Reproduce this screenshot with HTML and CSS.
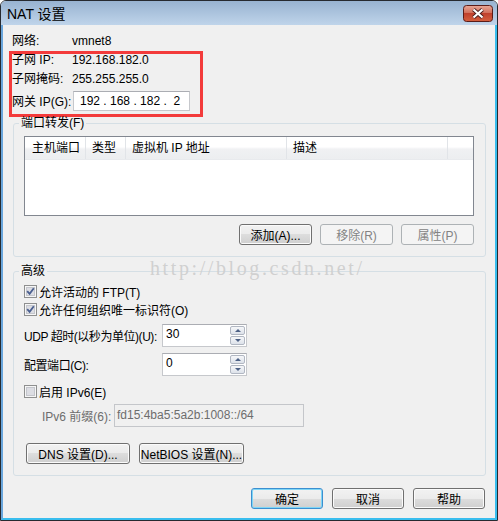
FILE: index.html
```html
<!DOCTYPE html>
<html lang="zh-CN">

<head>
    <meta charset="UTF-8">
    <meta name="viewport" content="width=device-width, initial-scale=1.0">
    <title>NAT 设置</title>
    <link rel="stylesheet" href="styles.css">
</head>

<body>
    <div class="window">
        <div class="titlebar">
            <span class="title">NAT 设置</span>
            <svg class="close" width="30" height="17" viewBox="0 0 30 17">
                <defs>
                    <linearGradient id="closeGrad" x1="0" y1="0" x2="0" y2="1">
                        <stop offset="0" stop-color="#e8a898" />
                        <stop offset="0.5" stop-color="#d06a55" />
                        <stop offset="0.5" stop-color="#c0402c" />
                        <stop offset="1" stop-color="#d5603f" />
                    </linearGradient>
                </defs>
                <rect x="0.5" y="0.5" width="29" height="16" rx="3" fill="url(#closeGrad)" stroke="#5a1c18" />
                <path d="M10.5 4.5 L19.5 12.5 M19.5 4.5 L10.5 12.5" stroke="#4a2020" stroke-width="4" />
                <path d="M10.5 4.5 L19.5 12.5 M19.5 4.5 L10.5 12.5" stroke="#fff" stroke-width="2.2" />
            </svg>
        </div>

        <div class="client">
            <div class="info">
                <span class="lbl">网络:</span>
                <span>vmnet8</span>
            </div>

            <div class="redbox">
                <div class="row r1"><span class="lbl">子网 IP:</span><span>192.168.182.0</span></div>
                <div class="row r2"><span class="lbl">子网掩码:</span><span>255.255.255.0</span></div>
                <div class="row r3"><span class="lbl">网关 IP(G):</span><span class="ipbox">192 . 168 . 182 .  2</span></div>
            </div>

            <fieldset class="group ports">
                <legend>端口转发(F)</legend>
                <div class="list">
                    <div class="lv-head">
                        <span class="col c1">主机端口</span>
                        <span class="col c2">类型</span>
                        <span class="col c3">虚拟机 IP 地址</span>
                        <span class="col c4">描述</span>
                        <span class="col c5"></span>
                    </div>
                </div>
                <div class="btn-row">
                    <button class="btn">添加(A)...</button>
                    <button class="btn" disabled>移除(R)</button>
                    <button class="btn" disabled>属性(P)</button>
                </div>
            </fieldset>

            <fieldset class="group adv">
                <legend>高级</legend>
                <div class="check">
                    <svg class="cb" width="13" height="13" viewBox="0 0 13 13">
                        <rect x="0.5" y="0.5" width="12" height="12" fill="#f6f6f6" stroke="#8e8f8f" />
                        <rect x="2.5" y="2.5" width="8" height="8" fill="#dcdde3" stroke="#c4c6cc" />
                        <path d="M3.2 6.2 L5.6 8.8 L9.8 3.2" fill="none" stroke="#4a5f8f" stroke-width="1.8" />
                    </svg>
                    <span>允许活动的 FTP(T)</span>
                </div>
                <div class="check">
                    <svg class="cb" width="13" height="13" viewBox="0 0 13 13">
                        <rect x="0.5" y="0.5" width="12" height="12" fill="#f6f6f6" stroke="#8e8f8f" />
                        <rect x="2.5" y="2.5" width="8" height="8" fill="#dcdde3" stroke="#c4c6cc" />
                        <path d="M3.2 6.2 L5.6 8.8 L9.8 3.2" fill="none" stroke="#4a5f8f" stroke-width="1.8" />
                    </svg>
                    <span>允许任何组织唯一标识符(O)</span>
                </div>

                <div class="field-row">
                    <span class="flbl">UDP 超时(以秒为单位)(U):</span>
                    <div class="spin">
                        <span class="spin-val">30</span>
                        <div class="spin-btns">
                            <span class="arrow up"></span>
                            <span class="arrow down"></span>
                        </div>
                    </div>
                </div>
                <div class="field-row">
                    <span class="flbl">配置端口(C):</span>
                    <div class="spin">
                        <span class="spin-val">0</span>
                        <div class="spin-btns">
                            <span class="arrow up"></span>
                            <span class="arrow down"></span>
                        </div>
                    </div>
                </div>

                <div class="check ipv6">
                    <svg class="cb" width="13" height="13" viewBox="0 0 13 13">
                        <rect x="0.5" y="0.5" width="12" height="12" fill="#f6f6f6" stroke="#8e8f8f" />
                        <rect x="2.5" y="2.5" width="8" height="8" fill="#dcdde3" stroke="#c4c6cc" />
                    </svg>
                    <span>启用 IPv6(E)</span>
                </div>
                <div class="prefix-row">
                    <span class="plbl">IPv6 前缀(6):</span>
                    <span class="prefix-input">fd15:4ba5:5a2b:1008::/64</span>
                </div>

                <div class="net-btns">
                    <button class="btn dns">DNS 设置(D)...</button>
                    <button class="btn netbios">NetBIOS 设置(N)...</button>
                </div>
            </fieldset>

            <div class="dialog-btns">
                <button class="btn default">确定</button>
                <button class="btn">取消</button>
                <button class="btn">帮助</button>
            </div>
        </div>

        <div class="watermark">http://blog.csdn.net/</div>
    </div>
</body>
</html>
```

FILE: styles.css
```css
* {
    box-sizing: border-box;
}

body {
    margin: 0;
    font-family: "Liberation Sans", "Noto Sans CJK SC", sans-serif;
    font-size: 12px;
    color: #000;
    background-color: #fff;
}

.window {
    position: relative;
    width: 498px;
    height: 521px;
    border: 1px solid #262a30;
    border-radius: 6px 6px 0 0;
    display: flex;
    flex-direction: column;
    overflow: hidden;
}

/* title bar */
.titlebar {
    flex: none;
    height: 24px;
    display: flex;
    align-items: center;
    justify-content: space-between;
    padding: 0 4px 0 6px;
    background: linear-gradient(#98b3d1, #bfd4ea);
}

.title {
    font-size: 14px;
}

.close {
    display: block;
}

.client {
    flex: 1;
    background-color: #f0f0f0;
    border: 2px solid #38bdee;
    border-top: 0;
    border-left-color: #6aa6dc;
}

/* top info rows */
.info {
    display: flex;
    margin: 9px 0 0 9px;
    line-height: 14px;
}

.lbl {
    flex: none;
    width: 60px;
    white-space: nowrap;
}

.redbox {
    width: 194px;
    margin: 3px 0 0 6px;
    padding-bottom: 3px;
    border: 3px solid #f33b3b;
}

.redbox .row {
    display: flex;
    align-items: center;
}

.r1 {
    line-height: 13px;
}

.r2 {
    margin-top: 5px;
    line-height: 14px;
}

.r3 {
    margin-top: 4px;
    height: 21px;
}

.ipbox {
    width: 117px;
    height: 20px;
    margin-left: 1px;
    padding-left: 6px;
    border: 1px solid #c6c8cc;
    border-top-color: #abadb3;
    background-color: #fff;
    line-height: 18px;
    white-space: pre;
}

/* group boxes */
.group {
    min-width: 0;
    margin: 0 9px 0 10px;
    padding: 7px 11px 11px 10px;
    border: 1px solid #d5dfe5;
    border-radius: 3px;
}

.group legend {
    margin-left: -5px;
    padding: 0 2px;
    line-height: 12px;
}

.adv {
    margin-top: 8px;
    padding-top: 5px;
}

/* list view */
.list {
    height: 80px;
    border: 1px solid #828790;
    background-color: #fff;
}

.lv-head {
    display: flex;
    height: 23px;
    background: linear-gradient(#fff 0, #fff 45%, #f0f1f3 55%, #eceef0 100%);
    border-bottom: 1px solid #e8eaed;
}

.col {
    flex: none;
    padding-left: 6px;
    line-height: 22px;
    border-right: 1px solid #e1e4e8;
}

.c1 {
    width: 61px;
    padding-left: 7px;
}

.c2 {
    width: 40px;
}

.c3 {
    width: 161px;
}

.c4 {
    width: 161px;
}

.c5 {
    flex: 1;
    border-right: none;
}

/* buttons */
.btn {
    height: 21px;
    padding: 0;
    font: inherit;
    color: #000;
    border: 1px solid #707070;
    border-radius: 3px;
    background: linear-gradient(#f2f2f2 0, #ebebeb 50%, #dddddd 50%, #cfcfcf 100%);
    box-shadow: inset 0 0 0 1px #fbfbfb;
    white-space: nowrap;
}

.btn:disabled {
    color: #838383;
    border-color: #adb2b5;
    background: #f4f4f4;
    box-shadow: none;
}

.btn.default {
    border-color: #3c8fd0;
    box-shadow: inset 0 0 0 1px #7fd6f6;
}

.btn-row {
    display: flex;
    justify-content: flex-end;
    gap: 8px;
    margin-top: 8px;
}

.btn-row .btn {
    width: 73px;
}

/* advanced section */
.check {
    display: flex;
    align-items: center;
    gap: 2px;
    height: 18px;
}

.cb {
    display: block;
    flex: none;
}

.check.ipv6 {
    margin-top: 6px;
}

.field-row {
    display: flex;
    align-items: center;
    margin-top: 6px;
}

.flbl {
    flex: none;
    width: 138px;
    white-space: nowrap;
    letter-spacing: -0.45px;
}

.spin {
    display: flex;
    width: 85px;
    height: 23px;
    border: 1px solid #c6c8cc;
    border-top-color: #abadb3;
    background-color: #fff;
}

.spin-val {
    flex: 1;
    padding-left: 3px;
    line-height: 19px;
}

.spin-btns {
    display: flex;
    flex-direction: column;
    width: 17px;
    padding: 1px;
    gap: 1px;
}

.arrow {
    flex: 1;
    position: relative;
    border: 1px solid #b1b7c2;
    border-radius: 2px;
    background: linear-gradient(#f6f7f9, #dde2ea);
}

.arrow::after {
    content: "";
    position: absolute;
    left: 50%;
    top: 50%;
    margin: -2px 0 0 -3px;
    border-left: 3px solid transparent;
    border-right: 3px solid transparent;
}

.arrow.up::after {
    border-bottom: 3px solid #4d6185;
}

.arrow.down::after {
    border-top: 3px solid #4d6185;
}

.prefix-row {
    display: flex;
    align-items: center;
    margin-top: 4px;
    padding-left: 18px;
    color: #6d6d6d;
}

.plbl {
    flex: none;
    width: 72px;
    white-space: nowrap;
}

.prefix-input {
    width: 190px;
    height: 23px;
    padding-left: 2px;
    border: 1px solid #c4c6ca;
    line-height: 20px;
}

.net-btns {
    display: flex;
    gap: 9px;
    margin: 16px 0 0 2px;
}

.dns {
    width: 104px;
}

.netbios {
    width: 105px;
}

.dialog-btns {
    display: flex;
    justify-content: flex-end;
    gap: 9px;
    margin: 12px 10px 0 0;
}

.dialog-btns .btn {
    width: 72px;
}

/* blog watermark over the dialog */
.watermark {
    position: absolute;
    left: 149px;
    top: 256px;
    font-family: "Liberation Serif", serif;
    font-size: 20px;
    letter-spacing: 2.6px;
    color: #d0d0d0;
}
```
